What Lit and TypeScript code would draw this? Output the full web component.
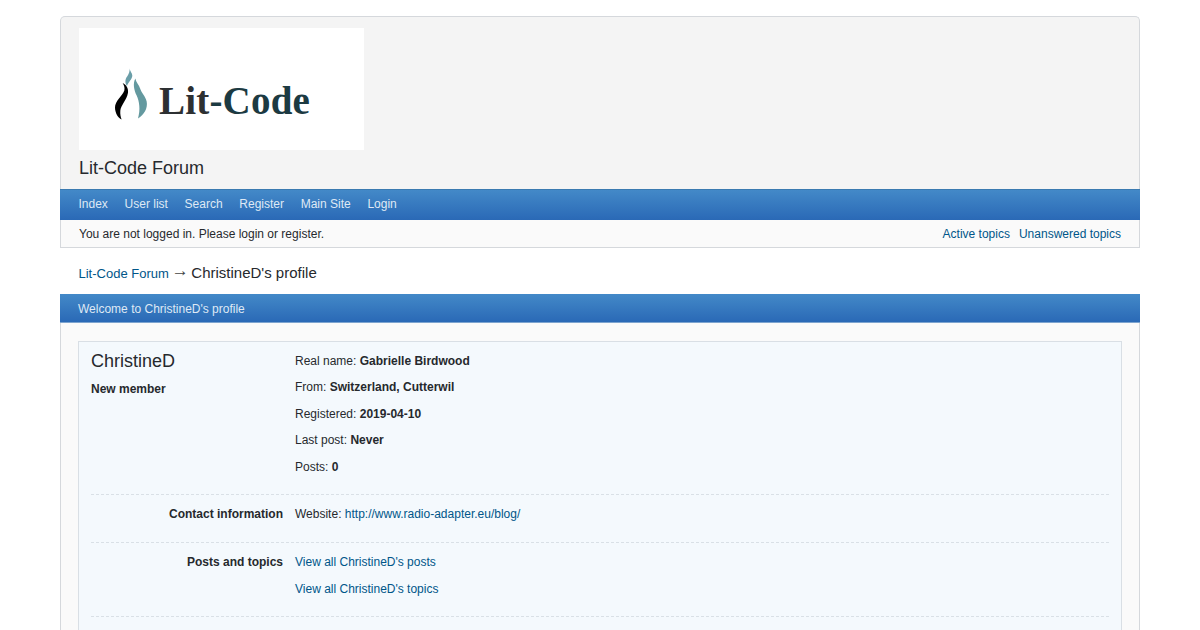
import { LitElement, html, css } from "lit";
import { customElement } from "lit/decorators.js";

@customElement("app-root")
export class AppRoot extends LitElement {
  static styles = css`
    :host {
      display: block;
      height: 630px;
      overflow: hidden;
      background: #fff;
      color: #26292d;
      font-family: "Liberation Sans", Arial, sans-serif;
      font-size: 12px;
    }
    * { box-sizing: border-box; }
    a { color: #005689; text-decoration: none; }
    .wrap { margin: 0 60px; padding-top: 16px; }
    .head {
      background: #f4f4f4;
      border: 1px solid #d5d8dc;
      border-bottom: none;
      border-radius: 5px 5px 0 0;
      height: 173px;
      padding: 11px 18px 0;
    }
    .logo {
      width: 285px;
      height: 122px;
      background: #fff;
      display: flex;
      align-items: flex-start;
      padding: 34px 0 0 29px;
      gap: 1px;
    }
    .logo svg { display: block; flex: none; }
    .logo-text {
      font-family: "Liberation Serif", serif;
      font-weight: bold;
      font-size: 39px;
      line-height: 1;
      color: #2d3032;
      letter-spacing: 0.2px;
      margin-top: 19px;
    }
    .logo-text span { color: #1c3a42; }
    .title {
      font-size: 18px;
      line-height: 20px;
      margin-top: 8px;
    }
    .bar {
      background: linear-gradient(#4389c8, #2a69b6);
      color: #dfe9f5;
    }
    .nav {
      height: 31px;
      border-top: 1px solid #3a7ab0;
      display: flex;
      align-items: center;
      padding: 0 18.5px 3px;
      gap: 16.7px;
    }
    .sub {
      height: 28px;
      background: #fafafa;
      border: 1px solid #d5d8dc;
      border-top: none;
      display: flex;
      align-items: center;
      justify-content: space-between;
      padding: 0 18px;
    }
    .sub .links { display: flex; gap: 9px; }
    .crumb {
      height: 46px;
      display: flex;
      align-items: center;
      padding: 3px 0 0 18.5px;
      font-size: 13px;
    }
    .crumb a { padding-top: 2px; }
    .crumb .sep { margin: 0 3px; padding-bottom: 3px; font-size: 17px; color: #444; }
    .crumb .cur { font-size: 15px; margin-left: -0.5px; }
    .welcome {
      height: 29px;
      display: flex;
      align-items: center;
      padding: 1px 18px 0;
      border-bottom: 1px solid #7da4cf;
    }
    .body {
      background: #fafafa;
      border: 1px solid #d5d8dc;
      border-top: none;
      padding: 18px 17px 0;
      height: 400px;
    }
    .card {
      background: #f4f9fd;
      border: 1px solid #d9dfe5;
      padding: 0 12px;
      height: 400px;
    }
    .row {
      display: grid;
      grid-template-columns: 192px 1fr;
      column-gap: 12px;
      border-bottom: 1px dashed #d9e0e6;
    }
    .row.top { height: 153px; }
    .row.contact { height: 48px; }
    .row.posts { height: 74px; }
    .name { font-size: 18px; line-height: 20px; padding-top: 9px; }
    .rank { font-weight: bold; margin-top: 11px; line-height: 14px; }
    .label { font-weight: bold; text-align: right; padding-top: 12px; line-height: 14px; }
    .items { padding-top: 12px; display: flex; flex-direction: column; gap: 13px; }
    .items div { line-height: 14px; }
    .row.top .items { gap: 12.5px; padding-top: 11.9px; }
  `;

  render() {
    return html`
      <div class="wrap">
        <div class="head">
          <div class="logo">
            <svg width="50" height="62" viewBox="0 0 150 166" preserveAspectRatio="none">
              <path fill="#000" d="M44 56 C54 60 62 70 60 82 C56 102 38 116 37 130 C36 140 38 148 41 154 C30 150 21 136 21 122 C21 104 42 92 49 76 C51 68 48 62 44 56Z" />
              <path fill="#6a9ea8" d="M65 14 C64 24 73 28 73 37 C72 47 62 52 57 64 C50 56 51 45 58 38 C63 31 66 24 65 14Z" />
              <path fill="#64999f" d="M82 44 C74 58 78 74 86 90 C94 106 98 128 90 151 C108 142 120 124 116 106 C112 90 100 82 96 70 C94 62 84 54 82 44Z" />
            </svg>
            <span class="logo-text">Lit<span>-Code</span></span>
          </div>
          <div class="title">Lit-Code Forum</div>
        </div>
        <div class="bar nav">
          <span>Index</span><span>User list</span><span>Search</span><span>Register</span><span>Main Site</span><span>Login</span>
        </div>
        <div class="sub">
          <span>You are not logged in. Please login or register.</span>
          <span class="links"><a>Active topics</a><a>Unanswered topics</a></span>
        </div>
        <div class="crumb">
          <a>Lit-Code Forum</a><span class="sep">→</span><span class="cur">ChristineD's profile</span>
        </div>
        <div class="bar welcome">Welcome to ChristineD's profile</div>
        <div class="body">
          <div class="card">
            <div class="row top">
              <div>
                <div class="name">ChristineD</div>
                <div class="rank">New member</div>
              </div>
              <div class="items">
                <div>Real name: <b>Gabrielle Birdwood</b></div>
                <div>From: <b>Switzerland, Cutterwil</b></div>
                <div>Registered: <b>2019-04-10</b></div>
                <div>Last post: <b>Never</b></div>
                <div>Posts: <b>0</b></div>
              </div>
            </div>
            <div class="row contact">
              <div class="label">Contact information</div>
              <div class="items"><div>Website: <a>http://www.radio-adapter.eu/blog/</a></div></div>
            </div>
            <div class="row posts">
              <div class="label">Posts and topics</div>
              <div class="items">
                <div><a>View all ChristineD's posts</a></div>
                <div><a>View all ChristineD's topics</a></div>
              </div>
            </div>
          </div>
        </div>
      </div>
    `;
  }
}
